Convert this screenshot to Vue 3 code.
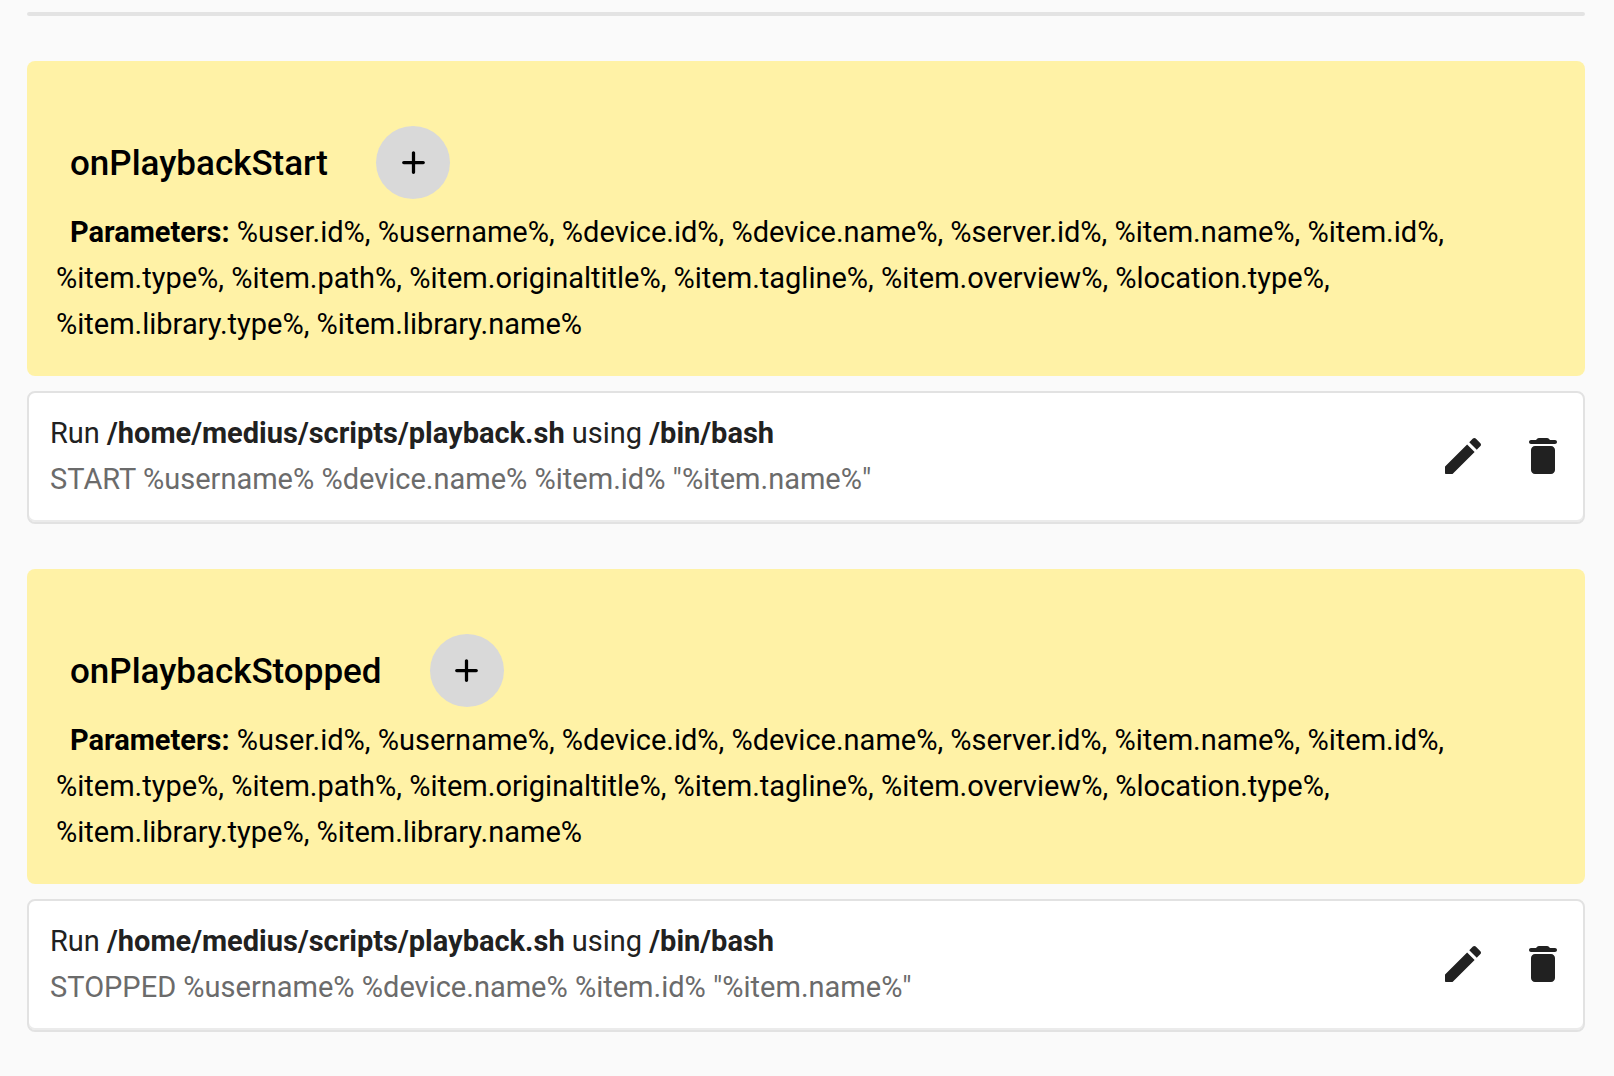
<script setup>
const parameters = '%user.id%, %username%, %device.id%, %device.name%, %server.id%, %item.name%, %item.id%, %item.type%, %item.path%, %item.originaltitle%, %item.tagline%, %item.overview%, %location.type%, %item.library.type%, %item.library.name%'
const events = [
  { name: 'onPlaybackStart', script: '/home/medius/scripts/playback.sh', shell: '/bin/bash', args: 'START %username% %device.name% %item.id% "%item.name%"' },
  { name: 'onPlaybackStopped', script: '/home/medius/scripts/playback.sh', shell: '/bin/bash', args: 'STOPPED %username% %device.name% %item.id% "%item.name%"' },
]
</script>

<template>
  <main class="page">
    <hr class="divider">
    <section v-for="event in events" :key="event.name" class="event">
      <div class="banner">
        <header class="heading">
          <h2>{{ event.name }}</h2>
          <button type="button" class="add" :aria-label="`Add ${event.name} script`">
            <svg viewBox="0 0 24 24"><path d="M18 13h-5v5c0 .55-.45 1-1 1s-1-.45-1-1v-5H6c-.55 0-1-.45-1-1s.45-1 1-1h5V6c0-.55.45-1 1-1s1 .45 1 1v5h5c.55 0 1 .45 1 1s-.45 1-1 1z" /></svg>
          </button>
        </header>
        <p class="parameters"><b>Parameters:</b> {{ parameters }}</p>
      </div>
      <article class="action">
        <div class="summary">
          <p>Run <b>{{ event.script }}</b> using <b>{{ event.shell }}</b></p>
          <p class="args">{{ event.args }}</p>
        </div>
        <button type="button" class="tool" aria-label="Edit">
          <svg viewBox="0 0 24 24"><path d="M3 17.46v3.04c0 .28.22.5.5.5h3.04c.13 0 .26-.05.35-.15L17.81 9.94l-3.75-3.75L3.15 17.1c-.1.1-.15.22-.15.36zM20.71 7.04c.39-.39.39-1.02 0-1.41l-2.34-2.34c-.39-.39-1.02-.39-1.41 0l-1.83 1.83 3.75 3.75 1.83-1.83z" /></svg>
        </button>
        <button type="button" class="tool" aria-label="Delete">
          <svg viewBox="0 0 24 24"><path d="M6 19c0 1.1.9 2 2 2h8c1.1 0 2-.9 2-2V9c0-1.1-.9-2-2-2H8c-1.1 0-2 .9-2 2v10zM18 4h-2.5l-.71-.71c-.18-.18-.44-.29-.7-.29H9.91c-.26 0-.52.11-.7.29L8.5 4H6c-.55 0-1 .45-1 1s.45 1 1 1h12c.55 0 1-.45 1-1s-.45-1-1-1z" /></svg>
        </button>
      </article>
    </section>
  </main>
</template>

<style>
body {
  background: #fafafa;
}
</style>

<style scoped>
.page {
  padding: 12px 29px 0 27px;
  font-family: Roboto, sans-serif;
  font-size: 29px;
  line-height: 46px;
  color: #212121;
}
.divider {
  height: 4px;
  margin: 0 0 45px;
  border: 0;
  border-radius: 2px;
  background: #e3e3e3;
}
.event {
  margin-bottom: 45px;
}
.banner {
  padding: 65px 29px 29px;
  border-radius: 8px;
  background: #fff2a6;
  color: #000;
}
.heading {
  display: flex;
  align-items: center;
  gap: 48px;
  padding-left: 14px;
}
h2 {
  margin: 0;
  padding-top: 2px;
  font-size: 35px;
  font-weight: 500;
}
button {
  display: flex;
  align-items: center;
  justify-content: center;
  flex: none;
  padding: 0;
  border: 0;
  background: none;
  color: inherit;
  cursor: pointer;
}
svg {
  fill: currentColor;
}
.add {
  width: 74px;
  height: 73px;
  border-radius: 50%;
  background: #d9d9d9;
}
.add svg {
  width: 39px;
  height: 39px;
}
p {
  margin: 0;
}
.parameters {
  margin-top: 10px;
  text-indent: 14px;
}
b {
  font-weight: 700;
}
.action {
  display: flex;
  align-items: center;
  margin-top: 15px;
  padding: 17px 0 20px 21px;
  border: 2px solid #e2e2e2;
  border-radius: 8px;
  background: #fff;
  box-shadow: inset 0 -2px #ebebeb;
}
.summary {
  flex: 1;
}
.args {
  color: #6b6b6b;
}
.tool {
  width: 80px;
  height: 80px;
}
.tool svg {
  width: 48px;
  height: 48px;
}
</style>
